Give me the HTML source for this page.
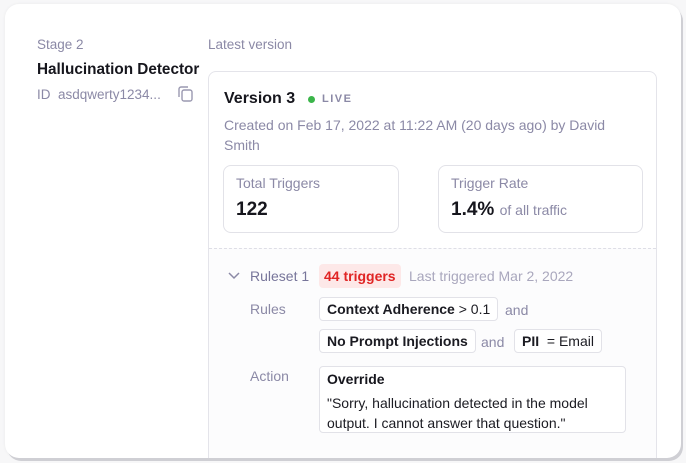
<!DOCTYPE html>
<html><head><style>
*{box-sizing:border-box;margin:0;padding:0}
body{width:686px;height:463px;background:#f7f7f8;font-family:"Liberation Sans",sans-serif;position:relative;overflow:hidden}
.outer{position:absolute;left:5px;top:4px;width:676px;height:454px;background:#fff;border-radius:14px;box-shadow:2px 3px 0 #cfcfd4,0 0 3px rgba(0,0,0,.06);overflow:hidden}
.a{position:absolute;white-space:nowrap}
.g{color:#8b89a6}
.inner{position:absolute;left:203px;top:67px;width:449px;height:400px;border:1px solid #e4e4ea;border-radius:8px;background:#fff;overflow:hidden}
.low{position:absolute;left:0;top:176px;width:100%;height:300px;background:#fcfcfd;border-top:1px dashed #dedee6}
.box{position:absolute;border:1px solid #e2e2e8;border-radius:8px;background:#fff}
.chip{position:absolute;border:1px solid #e2e2e8;border-radius:4px;background:#fff;height:24px;padding:0 7px;line-height:22px;font-size:14px;color:#1b1b22;white-space:nowrap}
</style></head><body>
<div class="outer">
<div class="a g" style="left:32px;top:33px;font-size:13.5px">Stage 2</div>
<div class="a" style="left:32px;top:57px;font-size:15.3px;font-weight:bold;color:#16161d">Hallucination Detector</div>
<div class="a g" style="left:32px;top:83px;font-size:13.5px">ID&nbsp;&nbsp;asdqwerty1234...</div>
<svg class="a" style="left:172px;top:82px" width="16" height="16" viewBox="0 0 16 16" fill="none" stroke="#9a98b0" stroke-width="1.4"><path d="M2 11V3a2 2 0 0 1 2-2h7"/><rect x="5" y="4" width="10" height="11" rx="2"/></svg>
<div class="a g" style="left:203px;top:33px;font-size:13.5px">Latest version</div>
<div class="inner">
 <div class="a" style="left:15px;top:18px;font-size:16px;font-weight:bold;color:#16161d">Version 3</div>
 <div class="a" style="left:99px;top:24px;width:7px;height:7px;border-radius:50%;background:#3bb54a"></div>
 <div class="a" style="left:113px;top:21px;font-size:11px;font-weight:bold;letter-spacing:1.5px;color:#8b89a6">LIVE</div>
 <div class="a g" style="left:15px;top:43px;font-size:14px;line-height:20px;white-space:normal;width:410px">Created on Feb 17, 2022 at 11:22 AM (20 days ago) by David Smith</div>
 <div class="box" style="left:14px;top:93px;width:176px;height:68px">
  <div class="a g" style="left:12px;top:9px;font-size:14px">Total Triggers</div>
  <div class="a" style="left:12px;top:33px;font-size:19px;font-weight:bold;color:#16161d">122</div>
 </div>
 <div class="box" style="left:229px;top:93px;width:205px;height:68px">
  <div class="a g" style="left:12px;top:9px;font-size:14px">Trigger Rate</div>
  <div class="a" style="left:12px;top:33px;font-size:19px;font-weight:bold;color:#16161d">1.4% <span style="font-size:14px;font-weight:normal;color:#8b89a6">of all traffic</span></div>
 </div>
 <div class="low">
  <svg class="a" style="left:19px;top:23px" width="12" height="8" viewBox="0 0 12 8" fill="none" stroke="#8b89a6" stroke-width="1.5"><path d="M1 1l5 5 5-5"/></svg>
  <div class="a" style="left:41px;top:19px;font-size:14px;color:#77759a">Ruleset 1</div>
  <div class="a" style="left:110px;top:15px;height:24px;padding:0 5px;line-height:24px;background:#fde8e8;border-radius:4px;font-size:14px;font-weight:bold;color:#e02424">44 triggers</div>
  <div class="a" style="left:200px;top:19px;font-size:14px;color:#a9a7bd">Last triggered Mar 2, 2022</div>
  <div class="a g" style="left:41px;top:52px;font-size:14px">Rules</div>
  <div class="chip" style="left:110px;top:48px"><b>Context Adherence</b> &gt; 0.1</div>
  <div class="a g" style="left:296px;top:53px;font-size:14px">and</div>
  <div class="chip" style="left:110px;top:80px"><b>No Prompt Injections</b></div>
  <div class="a g" style="left:272px;top:85px;font-size:14px">and</div>
  <div class="chip" style="left:305px;top:80px"><b>PII</b>&nbsp; = Email</div>
  <div class="a g" style="left:41px;top:119px;font-size:14px">Action</div>
  <div class="box" style="left:110px;top:117px;width:307px;height:67px;border-radius:4px">
   <div class="a" style="left:7px;top:4px;font-size:14px;font-weight:bold;color:#16161d">Override</div>
   <div class="a" style="left:7px;top:26px;font-size:14px;line-height:20px;color:#1b1b22;white-space:normal;width:295px">"Sorry, hallucination detected in the model output. I cannot answer that question."</div>
  </div>
 </div>
</div>
</div>
</body></html>
